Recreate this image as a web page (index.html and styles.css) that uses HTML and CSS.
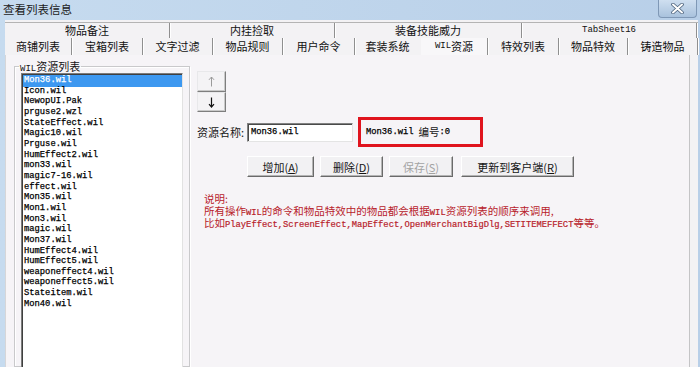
FILE: index.html
```html
<!DOCTYPE html>
<html>
<head>
<meta charset="utf-8">
<title>查看列表信息</title>
<link rel="stylesheet" href="styles.css">
</head>
<body>
<div class="window">
  <div class="titlebar">
    <span class="title">查看列表信息</span>
    <span class="close">
      <svg width="13" height="11" viewBox="0 0 13 11"><path d="M2 1.5 L11 9.5 M11 1.5 L2 9.5" stroke="#4a607a" stroke-width="3.6" stroke-linecap="round"/><path d="M2 1.5 L11 9.5 M11 1.5 L2 9.5" stroke="#fff" stroke-width="2" stroke-linecap="round"/></svg>
    </span>
  </div>
  <div class="client">
    <div class="tabs">
      <div class="row row1">
        <div class="tab w165">物品备注</div>
        <div class="tab w165">内挂捡取</div>
        <div class="tab w187">装备技能威力</div>
        <div class="tab w175"><span class="en">TabSheet16</span></div>
      </div>
      <div class="row row2">
        <div class="tab w67">商铺列表</div>
        <div class="tab w71">宝箱列表</div>
        <div class="tab w70">文字过滤</div>
        <div class="tab w70">物品规则</div>
        <div class="tab w72">用户命令</div>
        <div class="tab w66 nosep">套装系统</div>
        <div class="tab w67 active"><span class="en">WIL</span>资源</div>
        <div class="tab w71">特效列表</div>
        <div class="tab w69">物品特效</div>
        <div class="tab w70">铸造物品</div>
      </div>
    </div>
    <div class="page">
      <fieldset class="group">
        <legend><span class="en">WIL</span>资源列表</legend>
        <ul class="listbox">
          <li class="sel">Mon36.wil</li>
          <li>Icon.wil</li>
          <li>NewopUI.Pak</li>
          <li>prguse2.wzl</li>
          <li>StateEffect.wil</li>
          <li>Magic10.wil</li>
          <li>Prguse.wil</li>
          <li>HumEffect2.wil</li>
          <li>mon33.wil</li>
          <li>magic7-16.wil</li>
          <li>effect.wil</li>
          <li>Mon35.wil</li>
          <li>Mon1.wil</li>
          <li>Mon3.wil</li>
          <li>magic.wil</li>
          <li>Mon37.wil</li>
          <li>HumEffect4.wil</li>
          <li>HumEffect5.wil</li>
          <li>weaponeffect4.wil</li>
          <li>weaponeffect5.wil</li>
          <li>Stateitem.wil</li>
          <li>Mon40.wil</li>
        </ul>
      </fieldset>
      <div class="side">
        <div class="arrows">
          <div class="abtn">
            <svg width="7" height="11" viewBox="0 0 7 11"><path d="M3.5 1 V10.5 M1 3.8 L3.5 1 L6 3.8" stroke="#9a9a9a" stroke-width="1" fill="none"/></svg>
          </div>
          <div class="abtn">
            <svg width="7" height="11" viewBox="0 0 7 11"><path d="M3.5 0.5 V10 M1 7.2 L3.5 10 L6 7.2" stroke="#111" stroke-width="1.2" fill="none"/></svg>
          </div>
        </div>
        <div class="namerow">
          <span class="label">资源名称:</span>
          <div class="input"><span class="en">Mon36.wil</span></div>
          <div class="info"><span class="en">Mon36.wil</span><span class="num">编号</span><span class="en">:0</span></div>
        </div>
        <div class="btnrow">
          <div class="btn b-add">增加(<u>A</u>)</div>
          <div class="btn b-del">删除(<u>D</u>)</div>
          <div class="btn b-save disabled">保存(<u>S</u>)</div>
          <div class="btn b-upd">更新到客户端(<u>R</u>)</div>
        </div>
        <div class="note">
          <p>说明:</p>
          <p>所有操作<span class="en">WIL</span>的命令和物品特效中的物品都会根据<span class="en">WIL</span>资源列表的顺序来调用,</p>
          <p>比如<span class="en">PlayEffect,ScreenEffect,MapEffect,OpenMerchantBigDlg,SETITEMEFFECT</span>等等。</p>
        </div>
      </div>
    </div>
  </div>
</div>
</body>
</html>
```

FILE: styles.css
```css
* { box-sizing: border-box; margin: 0; padding: 0; }
html, body { width: 700px; height: 367px; overflow: hidden; }
body {
  font-family: "Noto Sans CJK SC", "Liberation Sans", sans-serif;
  font-size: 11px;
  color: #151515;
  background: #bcd3ea;
}
.en { font-family: "Liberation Mono", "Noto Sans CJK SC", monospace; font-size: 8.8px; }

.window {
  width: 700px;
  height: 367px;
  display: flex;
  flex-direction: column;
  background: linear-gradient(to right, #c6dbef, #b8cfe8);
}
.titlebar {
  height: 20px;
  display: flex;
  align-items: flex-start;
  padding-left: 3px;
}
.title {
  font-size: 11.5px;
  line-height: 19px;
  color: #1c1c1c;
}
.close {
  margin-left: auto;
  margin-right: 3px;
  width: 39px;
  height: 18px;
  display: flex;
  align-items: center;
  justify-content: center;
  background: linear-gradient(#cfdff0, #a9c2dd);
  border: 1px solid #7f98b6;
  border-top: none;
  border-radius: 0 0 4px 4px;
}

.client {
  flex: 1;
  margin: 0 2px 0 5px;
  background: #f3f2f4;
  display: flex;
  flex-direction: column;
  padding-top: 2px;
  min-height: 0;
}
.row { display: flex; }
.row1 { height: 16px; border-top: 1px solid #b4b4b4; }
.row2 { height: 17px; }
.tab {
  display: flex;
  align-items: center;
  justify-content: center;
  border-right: 1px solid #8f8f8f;
  box-shadow: 1px 0 0 #ffffff;
  line-height: 1;
  white-space: nowrap;
  color: #111;
}
.tab .en { font-size: 9px; }
.nosep { border-right-color: transparent; box-shadow: none; }
.active { background: #f8f7f9; }
.w165 { width: 165px; }
.w187 { width: 187px; }
.w175 { width: 175px; }
.w66 { width: 66px; }
.w67 { width: 67px; }
.w69 { width: 69px; }
.w70 { width: 70px; }
.w71 { width: 71px; }
.w72 { width: 72px; }

.page {
  flex: 1;
  min-height: 0;
  margin-right: 8px;
  background: #f6f4f7;
  border-left: 1px solid #d6d6d8;
  border-right: 1px solid #c4c4c6;
  display: flex;
  padding: 5px 0 0 8px;
  gap: 7px;
  overflow: hidden;
}

.group {
  width: 176px;
  flex: none;
  border: 1px solid #c9c9cb;
  box-shadow: inset 1px 1px 0 #ffffff, 1px 1px 0 #ffffff;
  padding: 1px 6px 0 6px;
  min-width: 0;
}
.group legend {
  margin-left: -2px;
  padding: 0 1px;
  font-size: 11px;
  line-height: 12px;
  height: 12px;
}
.group legend .en { font-size: 9px; }

.listbox {
  list-style: none;
  background: #ffffff;
  height: 320px;
  border: 1px solid;
  border-color: #7c7c7c #e2e2e2 #e2e2e2 #7c7c7c;
  box-shadow: inset 1px 1px 0 #3f3f3f;
  padding: 1px 0 0 1px;
  font-family: "Liberation Mono", monospace;
  font-size: 8.8px;
  color: #000;
  -webkit-text-stroke: 0.25px #000;
}
.listbox li {
  height: 10.67px;
  line-height: 10.67px;
  padding-left: 1px;
  white-space: nowrap;
}
.listbox li.sel {
  background: #3d98f0;
  color: #ffffff;
  -webkit-text-stroke: 0.25px #fff;
  height: 11.5px;
  line-height: 11.5px;
  margin-bottom: -0.83px;
}

.side {
  display: flex;
  flex-direction: column;
  padding-top: 11px;
}
.arrows {
  width: 29px;
  display: flex;
  flex-direction: column;
}
.abtn {
  height: 21px;
  display: flex;
  align-items: center;
  justify-content: center;
  background: #f4f3f5;
  border: 1px solid;
  border-color: #e8e8ea #7e7e7e #7e7e7e #e8e8ea;
  box-shadow: inset -1px -1px 0 #c9c9c9;
}
.abtn + .abtn { height: 20px; }

.namerow {
  margin-top: 5px;
  display: flex;
  align-items: center;
  height: 30px;
}
.label { width: 50px; font-size: 11px; }
.input {
  width: 106px;
  height: 19px;
  background: #ffffff;
  border: 1px solid;
  border-color: #828282 #e4e4e4 #e4e4e4 #828282;
  box-shadow: inset 1px 1px 0 #4a4a4a;
  padding-left: 3px;
  display: flex;
  align-items: center;
}
.input .en, .info .en { -webkit-text-stroke: 0.25px #000; color: #000; }
.info {
  margin-left: 5px;
  width: 125px;
  height: 30px;
  border: 3px solid #e0141e;
  display: flex;
  align-items: center;
  padding-left: 5px;
  font-size: 10.5px;
  line-height: 12px;
  white-space: nowrap;
}
.num { margin-left: 5px; }

.btnrow {
  margin-top: 9px;
  margin-left: 50px;
  display: flex;
  gap: 6px;
}
.btn {
  height: 21px;
  display: flex;
  align-items: center;
  justify-content: center;
  background: #f2f1f3;
  border: 1px solid;
  border-color: #ffffff #6a6a6a #6a6a6a #ffffff;
  box-shadow: inset -1px -1px 0 #b4b4b4;
  font-size: 11px;
  white-space: nowrap;
}
.btn u { text-decoration: underline; }
.b-add { width: 67px; }
.b-del { width: 63px; }
.b-save { width: 64px; }
.b-upd { width: 113px; margin-left: 2px; }
.disabled { color: #a3a3a3; }

.note {
  margin-top: 16px;
  margin-left: 7px;
  color: #b8222b;
  font-size: 10.5px;
  line-height: 12px;
  white-space: nowrap;
}
.note p { height: 12px; }
.note .en { font-size: 8.8px; -webkit-text-stroke: 0.2px #b8222b; }
```
